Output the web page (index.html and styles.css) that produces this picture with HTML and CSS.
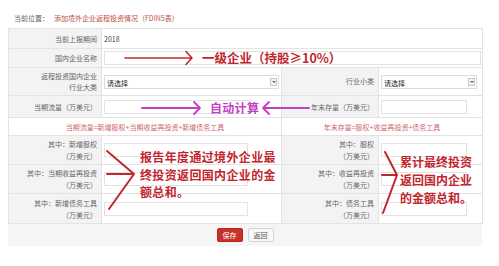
FILE: index.html
```html
<!DOCTYPE html>
<html lang="zh-CN">
<head>
    <meta charset="UTF-8">
    <meta name="viewport" content="width=device-width, initial-scale=1.0">
    <title>添加境外企业返程投资情况（FDIN5表）</title>
    <link rel="stylesheet" href="styles.css">
</head>
<body>
    <div class="crumb"><span class="crumb-label">当前位置：</span><span class="crumb-title">添加境外企业返程投资情况（FDIN5表）</span></div>
    <table class="form">
        <colgroup>
            <col class="col-label">
            <col class="col-value">
            <col class="col-label2">
            <col class="col-value2">
        </colgroup>
        <tr class="row-period">
            <th>当前上报期间</th>
            <td colspan="3" class="plain">2018</td>
        </tr>
        <tr class="row-name">
            <th>国内企业名称</th>
            <td colspan="3"><div class="field field-full"></div></td>
        </tr>
        <tr class="row-industry">
            <th>返程投资国内企业<br>行业大类</th>
            <td><div class="select select-wide">请选择<span class="caret"></span></div></td>
            <th>行业小类</th>
            <td><div class="select">请选择<span class="caret"></span></div></td>
        </tr>
        <tr class="row-flow">
            <th>当期流量（万美元）</th>
            <td><div class="field"></div></td>
            <th>年末存量（万美元）</th>
            <td><div class="field field-short"></div></td>
        </tr>
        <tr class="row-formula">
            <td colspan="2" class="formula">当期流量=新增股权+当期收益再投资+新增债务工具</td>
            <td colspan="2" class="formula">年末存量=股权+收益再投资+债务工具</td>
        </tr>
        <tr class="row-sub">
            <th>其中：新增股权<br>（万美元）</th>
            <td><div class="field field-mid"></div></td>
            <th>其中：股权<br>（万美元）</th>
            <td><div class="field field-short"></div></td>
        </tr>
        <tr class="row-sub">
            <th>其中：当期收益再投资<br>（万美元）</th>
            <td><div class="field field-mid"></div></td>
            <th>其中：收益再投资<br>（万美元）</th>
            <td><div class="field field-short"></div></td>
        </tr>
        <tr class="row-sub row-last">
            <th>其中：新增债务工具<br>（万美元）</th>
            <td><div class="field field-mid"></div></td>
            <th>其中：债务工具<br>（万美元）</th>
            <td><div class="field field-short"></div></td>
        </tr>
    </table>
    <div class="actions">
        <button class="btn btn-save">保存</button>
        <button class="btn btn-back">返回</button>
    </div>

    <!-- hand-drawn notes laid over the form -->
    <svg class="marks" width="499" height="266" viewBox="0 0 499 266">
        <path class="mark-red" d="M125 58 H192 M186 51.5 Q189 55 192 58 Q189 61 186 64.5"/>
        <path class="mark-pink" d="M142 108 H200 M194 102 Q197 105 200 108 Q197 111 194 114"/>
        <path class="mark-pink" d="M309 108 H263 M269 102 Q266 105 263 108 Q266 111 269 114"/>
        <path class="mark-red thick" d="M107 151 L134 174 L109 209 M107 174 H133"/>
        <path class="mark-red thick" d="M385 152 L397 175 L383 213 M382 175 H396"/>
    </svg>
    <div class="note note-top">一级企业（持股≥10%）</div>
    <div class="note note-auto">自动计算</div>
    <div class="note note-left">报告年度通过境外企业最<br>终投资返回国内企业的金<br>额总和。</div>
    <div class="note note-right">累计最终投资<br>返回国内企业<br>的金额总和。</div>
</body>
</html>
```

FILE: styles.css
```css
body { margin: 8px; background: #fff; font-family: "Noto Sans CJK SC", "Liberation Sans", sans-serif; font-size: 7px; color: #555; }
.crumb { height: 20px; line-height: 20px; padding-left: 6px; }
.crumb-label { color: #666; }
.crumb-title { color: #b8503e; margin-left: 5px; }

.form { width: 474px; table-layout: fixed; border-collapse: collapse; }
.col-label { width: 93px; }
.col-value { width: 180px; }
.col-label2 { width: 97px; }
.col-value2 { width: 104px; }
.form th, .form td { border: 1px solid #e3e3e3; padding: 0; vertical-align: middle; }
.form th { background: #f3f3f3; font-weight: normal; text-align: right; padding-right: 4px; line-height: 12px; color: #666; }
.form td { background: #fff; padding-left: 2px; }
.form td.plain { color: #444; padding-left: 2px; }
.row-period { height: 20px; }
.row-name { height: 19px; }
.row-industry { height: 28px; }
.row-industry th { line-height: 11px; }
.row-flow { height: 22px; }
.row-formula { height: 18px; }
.row-sub { height: 29px; }
.row-last { height: 30px; }
.formula { text-align: center; color: #d2646c; padding-left: 0 !important; }

.field { height: 12px; border: 1px solid #e2e2e2; background: #fff; width: 145px; }
.field-full { width: 375px; }
.field-mid { width: 142px; }
.field-short { width: 84px; }
.select { position: relative; height: 14px; line-height: 14px; width: 96px; border: 1px solid #dcdcdc; padding-left: 2px; box-sizing: border-box; color: #222; }
.select-wide { width: 175px; }
.caret { position: absolute; right: 1px; top: 2px; width: 7px; height: 8px; border: 1px solid #c8c8c8; background: #f4f4f4; box-sizing: border-box; }
.caret::after { content: ""; position: absolute; left: 1px; top: 2px; border-left: 2px solid transparent; border-right: 2px solid transparent; border-top: 2px solid #666; }

.actions { width: 474px; height: 22px; background: #f5f5f5; display: flex; justify-content: center; align-items: center; gap: 5px; }
.btn { font-family: inherit; font-size: 7px; width: 26px; height: 14px; padding: 0; border-radius: 2px; cursor: pointer; }
.btn-save { background: #c8302a; border: 1px solid #b42820; color: #fff; }
.btn-back { background: #f8f8f8; border: 1px solid #d4d4d4; color: #555; }

.marks { position: absolute; left: 0; top: 0; pointer-events: none; }
.mark-red, .mark-pink { fill: none; stroke-linecap: round; stroke-linejoin: round; stroke-width: 1.6; }
.mark-red { stroke: #c2262d; }
.mark-pink { stroke: #c43fc6; stroke-width: 1.8; }
.thick { stroke-width: 2; }

.note { position: absolute; font-weight: 700; white-space: nowrap; }
.note-top { left: 202px; top: 50px; font-size: 12.5px; line-height: 16px; color: #c2262d; }
.note-auto { left: 210px; top: 100px; font-size: 12px; line-height: 16px; letter-spacing: 0.3px; color: #c43fc6; }
.note-left { left: 140px; top: 148px; font-size: 12px; line-height: 17.5px; letter-spacing: 0.35px; color: #c2262d; }
.note-right { left: 400px; top: 153px; font-size: 12px; line-height: 18px; color: #c2262d; }
```
